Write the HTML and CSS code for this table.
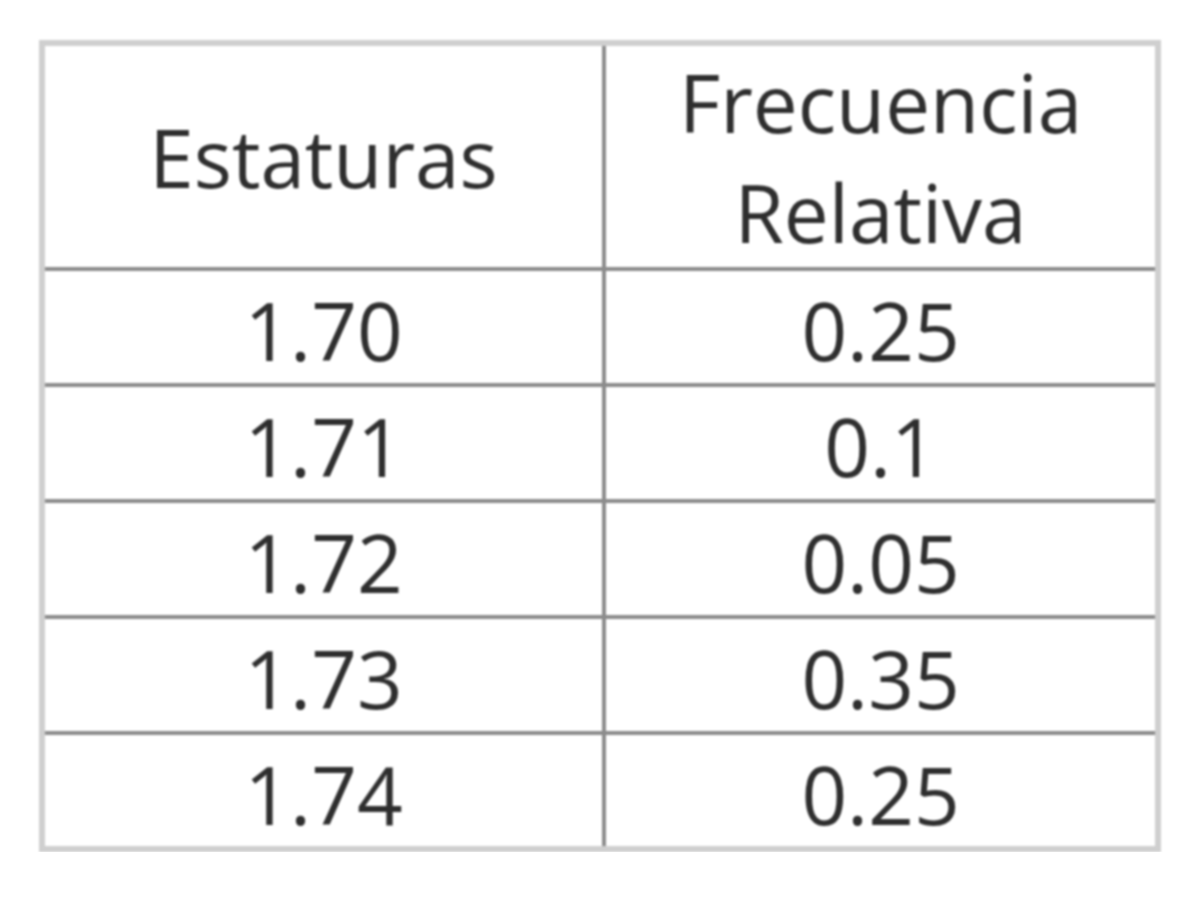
FILE: index.html
```html
<!DOCTYPE html>
<html lang="es">
<head>
  <meta charset="UTF-8">
  <title>Estaturas</title>
  <link rel="stylesheet" href="styles.css">
</head>
<body>

<table class="freq-table">
  <colgroup>
    <col class="col-left">
    <col class="col-right">
  </colgroup>
  <thead>
    <tr>
      <th>Estaturas</th>
      <th>Frecuencia<br>Relativa</th>
    </tr>
  </thead>
  <tbody>
    <tr><td>1.70</td><td>0.25</td></tr>
    <tr><td>1.71</td><td>0.1</td></tr>
    <tr><td>1.72</td><td>0.05</td></tr>
    <tr><td>1.73</td><td>0.35</td></tr>
    <tr><td>1.74</td><td>0.25</td></tr>
  </tbody>
</table>

</body>
</html>
```

FILE: styles.css
```css
* {
  box-sizing: border-box;
}

body {
  margin: 0;
  background-color: #fff;
  font-family: "Open Sans", "Liberation Sans", sans-serif;
  color: #2e2e2e;
}

.freq-table {
  margin: 40px 0 0 39px;
  width: 1122px;
  table-layout: fixed;
  border-collapse: collapse;
  border: 6px solid #cfcfcf;
  filter: blur(0.9px);
}

.col-left {
  width: 562px;
}

.freq-table th,
.freq-table td {
  border: 4px solid #8c8c8c;
  text-align: center;
  font-size: 80px;
  font-weight: 500;
  padding: 0;
}

.freq-table th {
  height: 226px;
  line-height: 110px;
}

.freq-table td {
  height: 116px;
  line-height: 100px;
  padding-top: 6px;
}
```
